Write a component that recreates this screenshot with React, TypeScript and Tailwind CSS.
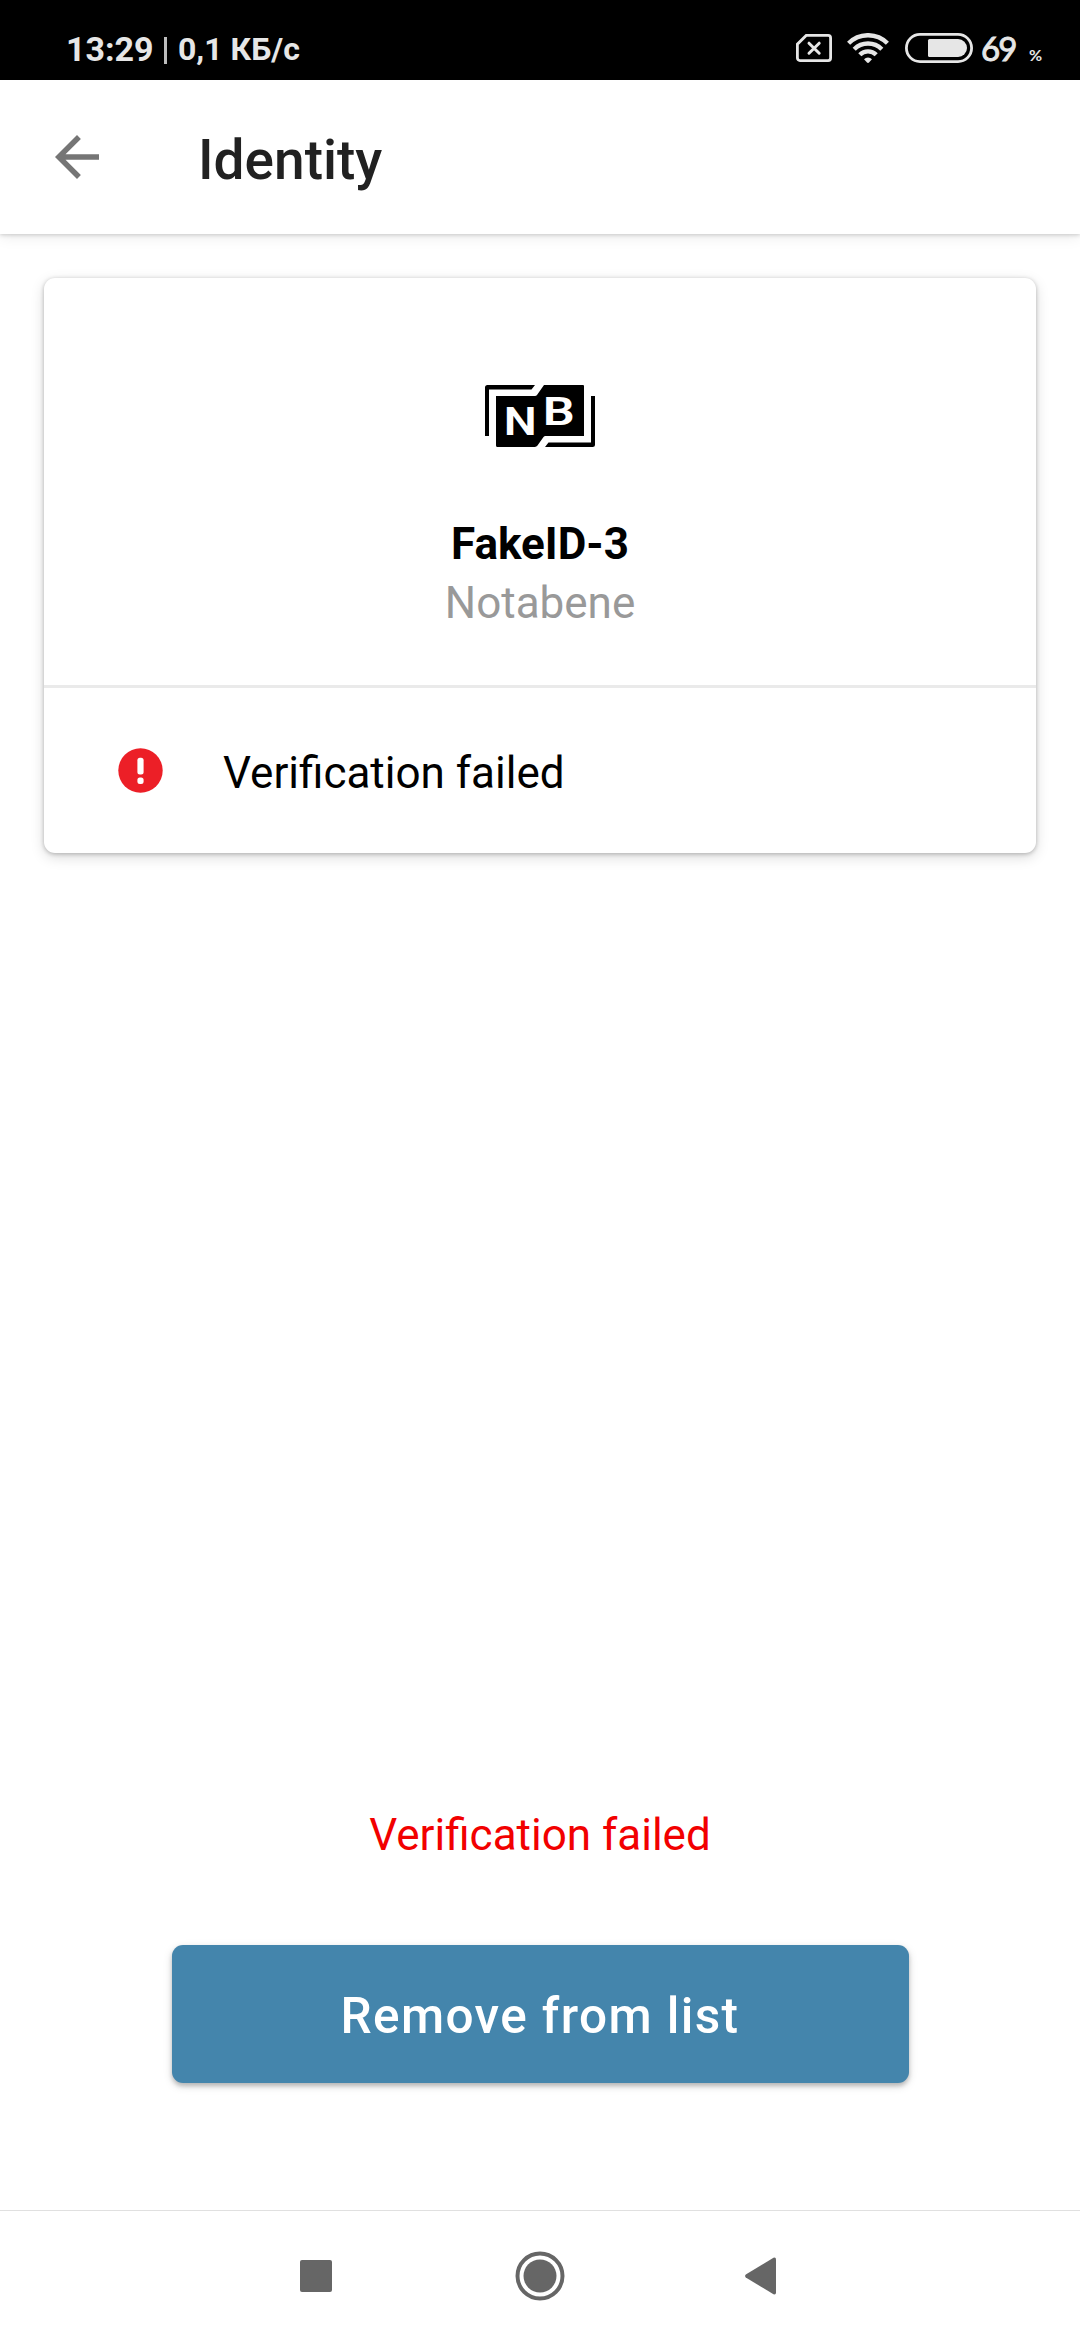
function SimIcon() {
  return (
    <svg className="h-7 w-9" viewBox="0 0 36 28" fill="none" stroke="#e6e6e6">
      <path d="M10.2 1.4H32.1a2.5 2.5 0 0 1 2.5 2.5V24.1a2.5 2.5 0 0 1-2.5 2.5H3.9a2.5 2.5 0 0 1-2.5-2.5V10.2z" strokeWidth="2.8" />
      <path d="M13 9.200l10.200 10M23.200 9.200L13 19.200" strokeWidth="3" strokeLinecap="round" />
    </svg>
  );
}

function WifiIcon() {
  return (
    <svg className="ml-[15px] h-[30px] w-[42px]" viewBox="0 0 42 30" fill="none" stroke="#e6e6e6" strokeWidth="4.4">
      <path d="M1.600 10.200a27.500 27.500 0 0 1 38.800 0" />
      <path d="M7.200 16.200a19.500 19.500 0 0 1 27.600 0" />
      <path d="M12.800 21.800a11.600 11.600 0 0 1 16.400 0" />
      <path d="M17 26.200a5.600 5.600 0 0 1 8 0L22 29.500a1.400 1.400 0 0 1-2 0z" fill="#e6e6e6" stroke="none" />
    </svg>
  );
}

function BatteryIcon() {
  return (
    <svg className="ml-4 h-[30px] w-[68px]" viewBox="0 0 68 30">
      <rect x="1.400" y="1.400" width="65.200" height="27.200" rx="13.600" fill="none" stroke="#e6e6e6" strokeWidth="2.800" />
      <path d="M24.500 6H53a9 9 0 0 1 0 18H24.500a1.500 1.500 0 0 1-1.500-1.500v-15a1.500 1.500 0 0 1 1.500-1.500z" fill="#e6e6e6" />
    </svg>
  );
}

function StatusBar() {
  return (
    <div className="flex h-20 shrink-0 items-start bg-black pl-[66px] text-[#e6e6e6]">
      <span className="mt-[29px] w-[98px] text-[34px] leading-10 font-bold whitespace-nowrap">13:29</span>
      <span className="mt-[37px] h-[27px] w-[3px] bg-[#bdbdbd]" />
      <span className="mt-[29px] ml-[11px] text-[32px] leading-10 font-bold whitespace-nowrap">0,1 КБ/с</span>
      <div className="mt-[33px] ml-auto flex shrink-0 items-center">
        <SimIcon />
        <WifiIcon />
        <BatteryIcon />
      </div>
      <div className="ml-2 flex w-[99px] shrink-0 items-baseline font-['Lato',sans-serif]">
        <span className="mt-[28px] w-[48px] text-[33px] leading-10 tracking-[-2px] [-webkit-text-stroke:0.9px_#e6e6e6]">69</span>
        <span className="text-[16px] font-bold">%</span>
      </div>
    </div>
  );
}

function NotabeneLogo() {
  return (
    <svg className="h-[62px] w-[110px]" viewBox="0 0 110 62">
      <path d="M0 51V2.500A2.500 2.500 0 0 1 2.500 0H50l-3.500 4.500H4V51z" />
      <path d="M110 11v48.500a2.500 2.500 0 0 1-2.500 2.500H60l3.500-4.500H106V11z" />
      <path d="M11 11h39a2.500 2.500 0 0 0 2-1L59 0h39a1 1 0 0 1 1 1v50H60.500a2.500 2.500 0 0 0-2 1L52.500 60.500a3.500 3.500 0 0 1-3 1.500H12.500A1.500 1.500 0 0 1 11 60.500z" />
      <g fill="#fff" fontFamily="Roboto, sans-serif" fontWeight="600" fontSize="39.500">
        <text x="18.800" y="50" textLength="33" lengthAdjust="spacingAndGlyphs">N</text>
        <text x="57.800" y="39.700" textLength="32" lengthAdjust="spacingAndGlyphs">B</text>
      </g>
    </svg>
  );
}

function AlertIcon() {
  return (
    <svg className="h-[45px] w-[45px]" viewBox="0 0 45 45">
      <circle cx="22.500" cy="22.500" r="22.200" fill="#ec1f27" />
      <rect x="19.400" y="9.700" width="6.200" height="16.700" rx="2.500" fill="#fff" />
      <rect x="19.400" y="29.500" width="6.200" height="6.400" rx="2.500" fill="#fff" />
    </svg>
  );
}

export default function App() {
  return (
    <div className="flex h-[2340px] w-[1080px] flex-col overflow-hidden bg-white font-['Roboto',sans-serif] text-black">
      <StatusBar />

      <header className="flex h-[154px] shrink-0 items-center pl-11 shadow-[0_1px_4px_rgba(0,0,0,0.18),0_3px_14px_rgba(0,0,0,0.08)]">
        <svg className="h-[66px] w-[66px]" viewBox="0 0 24 24" fill="#757575">
          <path d="M20 11H7.830l5.590-5.590L12 4l-8 8 8 8 1.410-1.410L7.830 13H20v-2z" />
        </svg>
        <h1 className="mt-1.5 ml-[88px] text-[55px] leading-[66px] font-medium text-[#212121]">Identity</h1>
      </header>

      <main className="flex flex-1 flex-col items-center pt-11">
        <section className="h-[575px] w-[992px] rounded-[11px] bg-white shadow-[0_1px_4px_rgba(0,0,0,0.24),0_4px_14px_rgba(0,0,0,0.15)]">
          <div className="flex h-[410px] flex-col items-center border-b-[3px] border-[#eaeaea] pt-[107px]">
            <NotabeneLogo />
            <h2 className="mt-[67px] text-[44px] leading-[60px] font-bold">FakeID-3</h2>
            <p className="text-[44px] leading-[58px] text-[#999]">Notabene</p>
          </div>
          <div className="flex h-[165px] items-center pl-[74px]">
            <AlertIcon />
            <span className="mt-1 ml-[60px] text-[44px] leading-[60px]">Verification failed</span>
          </div>
        </section>

        <p className="mt-auto text-[44px] leading-[60px] text-[#f20000]">Verification failed</p>
        <button className="mt-20 mb-[127px] h-[138px] w-[737px] rounded-[11px] bg-[#4485ac] pt-1 text-[49.500px] font-medium tracking-[1.400px] text-white shadow-[0_3px_4px_rgba(0,0,0,0.2),0_3px_10px_rgba(0,0,0,0.14)]">
          Remove from list
        </button>
      </main>

      <nav className="flex h-[130px] shrink-0 items-center border-t border-[#e0e0e0] pl-[300px]">
        <svg className="h-8 w-8" viewBox="0 0 32 32" fill="#666">
          <rect width="32" height="32" rx="2" />
        </svg>
        <svg className="ml-[183px] h-[50px] w-[50px]" viewBox="0 0 50 50" fill="#666">
          <circle cx="25" cy="25" r="22.500" fill="none" stroke="#666" strokeWidth="4" />
          <circle cx="25" cy="25" r="16.500" />
        </svg>
        <svg className="ml-[180px] h-[38px] w-[31px]" viewBox="0 0 31 38" fill="#666">
          <path d="M.8 17.500 28.500.7Q31 0 31 2.500v33Q31 38 28.500 37.300L.8 20.500Q-.6 19 .8 17.500z" />
        </svg>
      </nav>
    </div>
  );
}
